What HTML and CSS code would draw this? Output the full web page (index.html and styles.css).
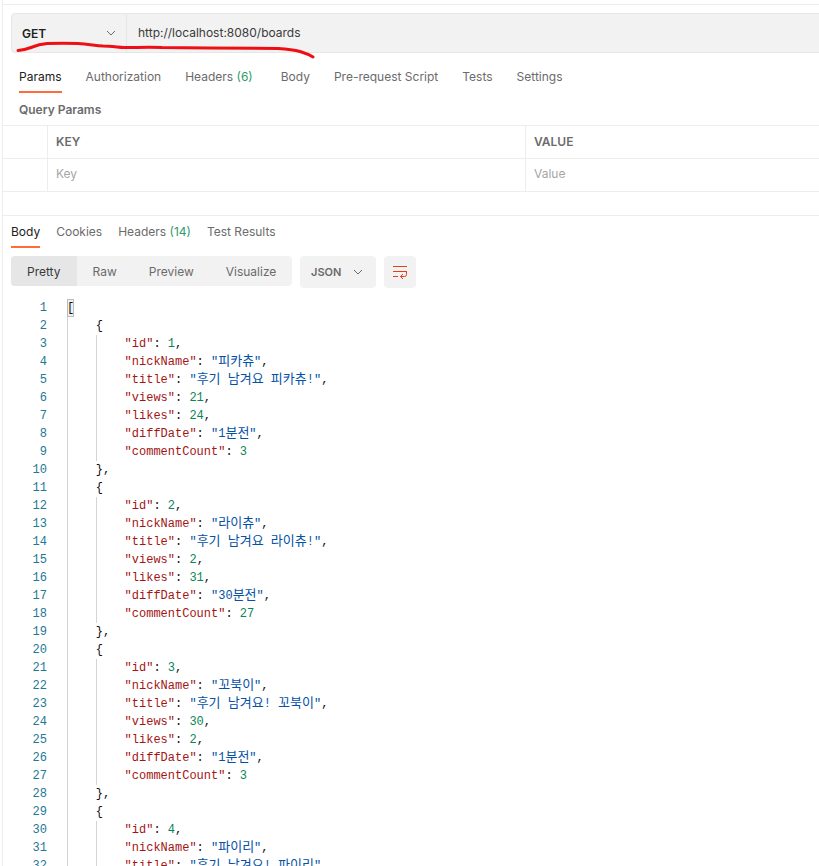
FILE: index.html
```html
<!DOCTYPE html>
<html lang="ko">
<head>
<meta charset="utf-8">
<title>GET boards</title>
<link rel="stylesheet" href="styles.css">
</head>
<body>
<div class="app">
  <section class="request">
    <div class="urlbar">
      <div class="method"><span>GET</span>
        <svg class="chev" width="10" height="6" viewBox="0 0 10 6"><path d="M1 1l4 4 4-4" fill="none" stroke="#6b6b6b" stroke-width="1"/></svg>
      </div>
      <div class="url">http://localhost:8080/boards</div>
    </div>
    <nav class="tabs reqtabs">
      <span class="tab active">Params</span>
      <span class="tab">Authorization</span>
      <span class="tab">Headers <em>(6)</em></span>
      <span class="tab">Body</span>
      <span class="tab">Pre-request Script</span>
      <span class="tab">Tests</span>
      <span class="tab">Settings</span>
    </nav>
    <div class="qp">Query Params</div>
    <div class="table">
      <div class="trow head"><div class="c0"></div><div class="c1">KEY</div><div class="c2">VALUE</div></div>
      <div class="trow ph"><div class="c0"></div><div class="c1">Key</div><div class="c2">Value</div></div>
    </div>
  </section>
  <section class="response">
    <nav class="tabs restabs">
      <span class="tab active">Body</span>
      <span class="tab">Cookies</span>
      <span class="tab">Headers <em>(14)</em></span>
      <span class="tab">Test Results</span>
    </nav>
    <div class="toolbar">
      <div class="seg">
        <span class="segi on">Pretty</span><span class="segi">Raw</span><span class="segi">Preview</span><span class="segi">Visualize</span>
      </div>
      <div class="fmt"><span>JSON</span>
        <svg width="10" height="6" viewBox="0 0 10 6"><path d="M1 1l4 4 4-4" fill="none" stroke="#6b6b6b" stroke-width="1"/></svg>
      </div>
      <div class="wrapbtn">
        <svg width="16" height="15" viewBox="0 0 16 15"><path d="M1 1.500h14M1 6.500h14M1 11.500h5M14.500 6.500v3a2 2 0 0 1-2 2H8.500M11 9l-2.500 2.500L11 14" fill="none" stroke="#e0401a" stroke-width="1"/></svg>
      </div>
    </div>
    <div class="code">
      <div class="l"><b>1</b><code><span class="br">[</span></code></div>
      <div class="l"><b>2</b><i></i><code>{</code></div>
      <div class="l"><b>3</b><i></i><i></i><code><u>"id"</u>: <s>1</s>,</code></div>
      <div class="l"><b>4</b><i></i><i></i><code><u>"nickName"</u>: <q>"<span class="ko">피카츄</span>"</q>,</code></div>
      <div class="l"><b>5</b><i></i><i></i><code><u>"title"</u>: <q>"<span class="ko">후기</span> <span class="ko">남겨요</span> <span class="ko">피카츄</span>!"</q>,</code></div>
      <div class="l"><b>6</b><i></i><i></i><code><u>"views"</u>: <s>21</s>,</code></div>
      <div class="l"><b>7</b><i></i><i></i><code><u>"likes"</u>: <s>24</s>,</code></div>
      <div class="l"><b>8</b><i></i><i></i><code><u>"diffDate"</u>: <q>"1<span class="ko">분전</span>"</q>,</code></div>
      <div class="l"><b>9</b><i></i><i></i><code><u>"commentCount"</u>: <s>3</s></code></div>
      <div class="l"><b>10</b><i></i><code>},</code></div>
      <div class="l"><b>11</b><i></i><code>{</code></div>
      <div class="l"><b>12</b><i></i><i></i><code><u>"id"</u>: <s>2</s>,</code></div>
      <div class="l"><b>13</b><i></i><i></i><code><u>"nickName"</u>: <q>"<span class="ko">라이츄</span>"</q>,</code></div>
      <div class="l"><b>14</b><i></i><i></i><code><u>"title"</u>: <q>"<span class="ko">후기</span> <span class="ko">남겨요</span> <span class="ko">라이츄</span>!"</q>,</code></div>
      <div class="l"><b>15</b><i></i><i></i><code><u>"views"</u>: <s>2</s>,</code></div>
      <div class="l"><b>16</b><i></i><i></i><code><u>"likes"</u>: <s>31</s>,</code></div>
      <div class="l"><b>17</b><i></i><i></i><code><u>"diffDate"</u>: <q>"30<span class="ko">분전</span>"</q>,</code></div>
      <div class="l"><b>18</b><i></i><i></i><code><u>"commentCount"</u>: <s>27</s></code></div>
      <div class="l"><b>19</b><i></i><code>},</code></div>
      <div class="l"><b>20</b><i></i><code>{</code></div>
      <div class="l"><b>21</b><i></i><i></i><code><u>"id"</u>: <s>3</s>,</code></div>
      <div class="l"><b>22</b><i></i><i></i><code><u>"nickName"</u>: <q>"<span class="ko">꼬북이</span>"</q>,</code></div>
      <div class="l"><b>23</b><i></i><i></i><code><u>"title"</u>: <q>"<span class="ko">후기</span> <span class="ko">남겨요</span>! <span class="ko">꼬북이</span>"</q>,</code></div>
      <div class="l"><b>24</b><i></i><i></i><code><u>"views"</u>: <s>30</s>,</code></div>
      <div class="l"><b>25</b><i></i><i></i><code><u>"likes"</u>: <s>2</s>,</code></div>
      <div class="l"><b>26</b><i></i><i></i><code><u>"diffDate"</u>: <q>"1<span class="ko">분전</span>"</q>,</code></div>
      <div class="l"><b>27</b><i></i><i></i><code><u>"commentCount"</u>: <s>3</s></code></div>
      <div class="l"><b>28</b><i></i><code>},</code></div>
      <div class="l"><b>29</b><i></i><code>{</code></div>
      <div class="l"><b>30</b><i></i><i></i><code><u>"id"</u>: <s>4</s>,</code></div>
      <div class="l"><b>31</b><i></i><i></i><code><u>"nickName"</u>: <q>"<span class="ko">파이리</span>"</q>,</code></div>
      <div class="l"><b>32</b><i></i><i></i><code><u>"title"</u>: <q>"<span class="ko">후기</span> <span class="ko">남겨요</span>! <span class="ko">파이리</span>"</q></code></div>
    </div>
  </section>
  <svg class="scribble" width="330" height="30" viewBox="0 0 330 30"><path d="M18 20.500C24 20 27 19 31 17.500C36 15.500 41 14 47 13.500C58 13 68 13 78 13.500C88 14 95 15.500 103 16C110 16 117 17 124 17.500C137 17.500 150 17 162 17.500C200 18 240 18 277 18.500C284 19 292 19.500 300 21.500C305 23 309 24.500 313 27" fill="none" stroke="#ee0f14" stroke-width="3" stroke-linecap="round"/></svg>
</div>
</body>
</html>
```
FILE: styles.css
```css
* { box-sizing: border-box; }
html, body { margin: 0; padding: 0; background: #fff; }
body { width: 819px; height: 866px; overflow: hidden; font-family: Inter, "Noto Sans", sans-serif; font-size: 12px; color: #6b6b6b; }
.app { position: relative; height: 866px; margin-left: 2px; padding-top: 4px; border-left: 1px solid #ededed; overflow: hidden; }
.request { border-top: 1px solid #ededed; padding-top: 8px; }
.urlbar { display: flex; height: 40px; margin-left: 8px; width: 820px; background: #f2f2f2; border: 1px solid #e6e6e6; border-radius: 4px 0 0 4px; color: #212121; }
.method { width: 115px; flex: none; display: flex; align-items: center; justify-content: space-between; padding: 0 10px; border-right: 1px solid #e6e6e6; font-weight: 600; }
.method span { margin-top: 1px; }
.url { padding-left: 11px; line-height: 38px; color: #3a3a3a; }
.tabs { display: flex; }
.tab { display: block; height: 100%; color: #6b6b6b; }
.tab em { font-style: normal; color: #2f9a6b; }
.tab.active { color: #212121; border-bottom: 2px solid #ff6c37; }
.reqtabs { height: 40px; margin-left: 16px; padding-top: 16px; gap: 24px; }
.reqtabs .tab:nth-child(4) { margin-left: 4px; }
.qp { height: 32px; padding: 9px 0 0 16px; font-weight: 600; color: #6b6b6b; }
.table { border-top: 1px solid #ededed; }
.trow { display: flex; height: 33px; border-bottom: 1px solid #ededed; line-height: 32px; }
.c0 { width: 45px; flex: none; border-right: 1px solid #ededed; }
.c1 { width: 478px; flex: none; padding-left: 8px; border-right: 1px solid #ededed; }
.c2 { flex: 1; padding-left: 8px; }
.head { font-weight: 600; color: #6b6b6b; }
.ph { color: #a6a6a6; line-height: 30px; }
.response { margin-top: 23px; border-top: 1px solid #ededed; }
.restabs { height: 32px; margin-left: 8px; padding-top: 8px; gap: 16px; }
.toolbar { display: flex; align-items: flex-start; margin: 8px 0 0 8px; gap: 8px; height: 43px; }
.seg { display: flex; height: 30px; width: 281px; background: #f2f2f2; border-radius: 4px; line-height: 31px; }
.segi { padding: 0 16px; }
.segi.on { background: #e6e6e6; border-radius: 4px 0 0 4px; color: #3a3a3a; }
.fmt { display: flex; align-items: center; justify-content: space-between; width: 76px; height: 32px; padding: 0 13px 0 11px; background: #f2f2f2; border-radius: 4px; font-weight: 600; font-size: 11px; }
.wrapbtn { display: flex; align-items: center; justify-content: center; width: 32px; height: 32px; background: #f2f2f2; border-radius: 4px; }
.code { font-family: "Liberation Mono", "Noto Sans CJK KR", monospace; font-size: 12px; line-height: 18px; color: #111; }
.l { display: flex; height: 18px; white-space: pre; }
.l b { width: 44px; flex: none; margin-right: 20px; text-align: right; font-weight: 400; color: #237893; }
.l i { width: 28.800px; flex: none; border-left: 1px solid #d4d4d4; }
.l code { font: inherit; }
.l u { text-decoration: none; color: #a31515; }
.l s { text-decoration: none; color: #098658; }
.l q { quotes: none; color: #0451a5; }
.ko { font-family: "Noto Sans CJK KR", sans-serif; font-size: 13px; line-height: 0; }
.br { display: inline-block; height: 18px; box-shadow: inset 0 0 0 1px #bdbdbd; background: #f0f0f0; }
.scribble { position: absolute; left: -3px; top: 30px; }
```
